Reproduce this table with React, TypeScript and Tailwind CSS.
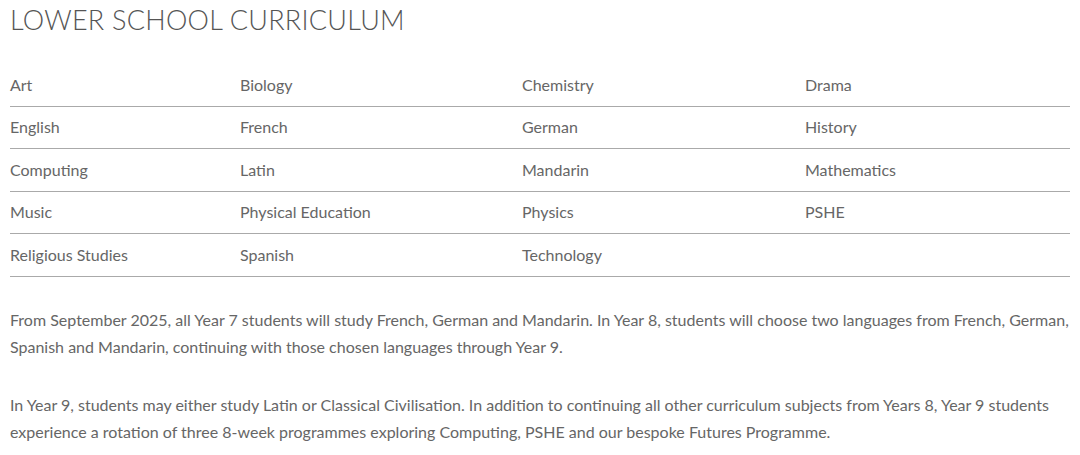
import React from "react";

const rows = [
  ["Art", "Biology", "Chemistry", "Drama"],
  ["English", "French", "German", "History"],
  ["Computing", "Latin", "Mandarin", "Mathematics"],
  ["Music", "Physical Education", "Physics", "PSHE"],
  ["Religious Studies", "Spanish", "Technology", ""],
];

export default function App() {
  return (
    <div className="bg-white w-[1080px] h-[455px] overflow-hidden px-[10px] text-[#666]" style={{ fontFamily: "Lato, 'Noto Sans', sans-serif" }}>
      <h1 className="text-[27px] font-light leading-[40px] text-[#555] tracking-[0.25px]">LOWER SCHOOL CURRICULUM</h1>
      <div className="mt-[24px] w-[1060px]">
        {rows.map((r, i) => (
          <div key={i} className="grid grid-cols-[230px_282px_283px_1fr] h-[42.5px] items-center border-b border-[#aaa] text-[16px]">
            {r.map((c, j) => (
              <div key={j}>{c}</div>
            ))}
          </div>
        ))}
      </div>
      <div className="mt-[29px] text-[16px] leading-[27px] w-[1066px]">
        <p>From September 2025, all Year 7 students will study French, German and Mandarin. In Year 8, students will choose two languages from French, German, Spanish and Mandarin, continuing with those chosen languages through Year 9.</p>
        <p className="mt-[31px]">In Year 9, students may either study Latin or Classical Civilisation. In addition to continuing all other curriculum subjects from Years 8, Year 9 students experience a rotation of three 8-week programmes exploring Computing, PSHE and our bespoke Futures Programme.</p>
      </div>
    </div>
  );
}
